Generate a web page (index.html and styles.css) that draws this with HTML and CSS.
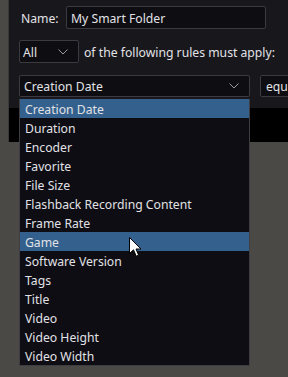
FILE: index.html
```html
<!DOCTYPE html>
<html>
<head>
<meta charset="utf-8">
<link rel="stylesheet" href="styles.css">
</head>
<body>
<div class="page">
  <div class="dialog">
    <div class="content">
      <div class="row name-row">
        <span class="label">Name:</span>
        <div class="input"><span>My Smart Folder</span></div>
      </div>
      <div class="row match-row">
        <div class="combo combo-all">
          <span>All</span>
          <svg class="chev" width="10" height="6" viewBox="0 0 10 6"><path d="M0.5 0.5 L5 5 L9.5 0.5" fill="none" stroke="#9a9aa0" stroke-width="1"/></svg>
        </div>
        <span class="text">of the following rules must apply:</span>
      </div>
      <div class="row rule-row">
        <div class="combo combo-field">
          <span>Creation Date</span>
          <svg class="chev" width="10" height="6" viewBox="0 0 10 6"><path d="M0.5 0.5 L5 5 L9.5 0.5" fill="none" stroke="#9a9aa0" stroke-width="1"/></svg>
        </div>
        <div class="combo combo-op"><span>equals</span></div>
      </div>
    </div>
    <div class="bar"></div>
  </div>
  <ul class="popup">
    <li class="sel">Creation Date</li>
    <li>Duration</li>
    <li>Encoder</li>
    <li>Favorite</li>
    <li>File Size</li>
    <li>Flashback Recording Content</li>
    <li>Frame Rate</li>
    <li class="sel">Game</li>
    <li>Software Version</li>
    <li>Tags</li>
    <li>Title</li>
    <li>Video</li>
    <li>Video Height</li>
    <li>Video Width</li>
  </ul>
  <svg class="cursor" width="13" height="21" viewBox="0 0 13 21"><path d="M0.5 0.5 L0.5 16.5 L4.5 12.8 L7.2 19.2 L9.6 18.2 L7 12 L12 12 Z" fill="#fff" stroke="#000" stroke-width="1" stroke-linejoin="miter"/></svg>
</div>
</body>
</html>
```
FILE: styles.css
```css
* { box-sizing: border-box; }
html, body { margin: 0; padding: 0; }
body {
  width: 288px;
  height: 377px;
  overflow: hidden;
  background: #4a4946;
  font-family: "Noto Sans", "Open Sans", sans-serif;
  font-size: 12.2px;
  color: #e2e2e6;
}
.page { position: relative; width: 288px; height: 377px; overflow: hidden; }
.dialog {
  margin-left: 8px;
  border-left: 1px solid #3a3937;
  width: 280px;
}
.content {
  background: #18171c;
  height: 108px;
  padding: 6px 0 0 10px;
  display: flex;
  flex-direction: column;
}
.row { display: flex; align-items: center; white-space: nowrap; }
.row span { padding-top: 1px; }
.name-row { height: 23px; }
.label { width: 47px; padding-left: 2px; }
.input {
  width: 200px;
  height: 23px;
  background: #0e0d12;
  border: 1px solid #3a3a40;
  border-radius: 2px;
  padding: 0 4px;
  display: flex;
  align-items: center;
}
.match-row { margin-top: 11px; height: 23px; }
.combo {
  height: 100%;
  background: #0e0d12;
  border: 1px solid #3a3a40;
  border-radius: 2px;
  display: flex;
  align-items: center;
  justify-content: space-between;
  padding: 0 10px 0 3px;
  flex: none;
  overflow: hidden;
}
.combo-all { width: 60px; }
.text { margin-left: 5px; }
.rule-row { margin-top: 12px; height: 22px; gap: 10px; }
.combo-field { width: 231px; padding-left: 4px; }
.combo-op { width: 60px; padding-left: 5px; }
.chev { display: block; }
.bar { background: #000; height: 34px; }
.popup {
  position: absolute;
  left: 19px;
  top: 99px;
  width: 231px;
  height: 267px;
  margin: 0;
  padding: 0;
  list-style: none;
  background: #0e0d14;
  border: 1px solid #3d3d42;
  border-top: none;
}
.popup li {
  height: 19px;
  line-height: 19px;
  padding: 1px 0 0 5px;
  white-space: nowrap;
}
.popup li.sel { background: #33608d; }
.cursor { position: absolute; left: 129px; top: 237px; }
```
